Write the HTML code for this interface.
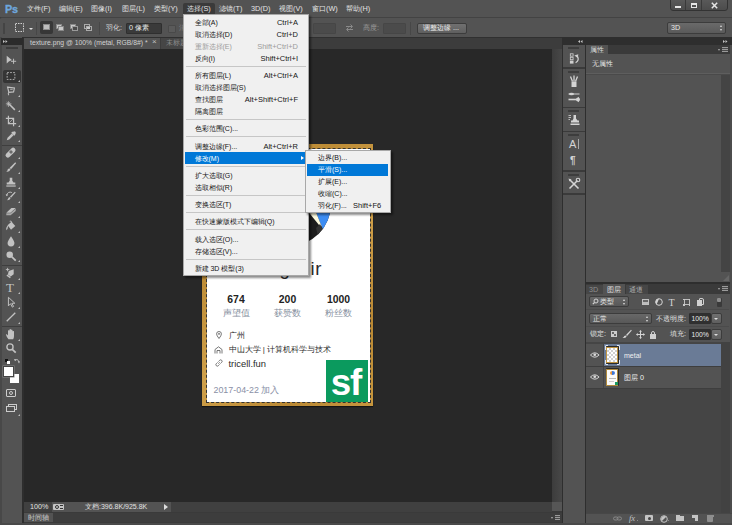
<!DOCTYPE html>
<html><head><meta charset="utf-8">
<style>
*{margin:0;padding:0;box-sizing:border-box}
html,body{width:732px;height:525px;overflow:hidden;background:#3a3a3a;font-family:"Liberation Sans",sans-serif;font-size:7.200px;color:#d8d8d8}
.a{position:absolute}
.t{position:absolute;white-space:nowrap;line-height:10px;height:10px}
svg{position:absolute;overflow:visible}
/* menubar */
#menubar{left:0;top:0;width:732px;height:17px;background:#535353}
#menubar .t{top:4px;color:#e4e4e4;font-size:7.300px}
#optbar{left:0;top:17px;width:732px;height:20px;background:#535353;border-top:1px solid #434343;border-radius:2px 0 0 0}
#optbar .t{top:4px}
#optbar>*{margin-top:1px}
.inp{position:absolute;background:#3a3a3a;border:1px solid #2f2f2f;border-radius:1px}
.inpd{position:absolute;background:#4b4b4b;border:1px solid #464646;border-radius:1px}
.btn{position:absolute;background:linear-gradient(#707070,#5f5f5f);border:1px solid #3c3c3c;border-radius:2px}
#tabbar{left:24px;top:37px;width:538.500px;height:12px;background:#3c3c3c;border-top:1.500px solid #303030}
#canvas{left:24px;top:49px;width:528px;height:453px;background:#282828}
#vscroll{left:552px;top:49px;width:9.500px;height:453px;background:linear-gradient(90deg,#3c3c3c,#484848)}
#toolbox{left:0;top:37px;width:24px;height:488px;background:#2e2e2e}
#toolbox .body{left:0;top:0;width:22px;height:486px;background:#535353;border-left:2px solid #484848}
/* dropdown menu */
.menu{position:absolute;background:#f0f0f0;border:1px solid #a8a8a8;box-shadow:2px 2px 2px rgba(0,0,0,.45)}
.menu .t{color:#151515;font-size:7px;margin-top:.5px}
.menu .r,.menu .sc{font-size:7.500px}
.menu .d{color:#9c9c9c}
.menu .r{right:10px}
.sep{position:absolute;left:2px;right:2px;height:1px;background:#c6c6c6}
.hl{position:absolute;background:#0078d7}
.menu .w{color:#fff}
.st{font-size:10.400px;font-weight:bold;color:#222;text-align:center}
.sl{font-size:9px;color:#838d9c;text-align:center}
.in{font-size:8px;color:#2a2a2a}
/* panels */
.pbg{background:#535353}
</style></head><body>

<!-- document canvas -->
<div class="a" id="canvas"></div>
<div class="a" id="vscroll"></div>
<div class="a" id="tabbar">
  <div class="a" style="left:0;top:-.5px;width:136px;height:11px;background:#535353"></div>
  <div class="t" style="left:6px;top:-.5px;color:#d2d2d2;font-size:6.800px">texture.png @ 100% (metal, RGB/8#) *</div>
  <div class="t" style="left:128px;top:-1px;color:#c0c0c0;font-size:8px">×</div>
  <div class="a" style="left:137px;top:-.5px;width:60px;height:11px;background:#464646"></div>
  <div class="t" style="left:142px;top:-.5px;color:#8c8c8c">未标题-1</div>
</div>

<!-- card -->
<div class="a" id="card" style="left:202px;top:144px;width:171px;height:262px;background:linear-gradient(135deg,#c89a44,#bd8c36 30%,#cfa04a 55%,#b98834 80%,#c6963e);box-shadow:0 1px 1px rgba(0,0,0,.5)">
 <div class="a" style="left:4.500px;top:4.500px;width:163.500px;height:253.500px;background:#fff;outline:1px dashed #333;outline-offset:-0.500px"></div>
 <!-- avatar -->
 <svg style="left:0;top:0" width="171" height="110" viewBox="0 0 171 110"><defs><clipPath id="av"><circle cx="85.750" cy="59.300" r="43.400"/></clipPath></defs>
 <g clip-path="url(#av)"><rect x="40" y="14" width="92" height="92" fill="#1d1d1d"/>
 <path d="M106.700 50H135V96H125.100Z" fill="#3d8df3"/>
 <path d="M104 65L112.700 65L119.700 82.500L117 81Z" fill="#fdfbe0"/>
 <path d="M114 84L118 80L121 86L116 92Z" fill="#333"/>
 </g></svg>
 <div class="t" style="left:77.500px;top:113.800px;height:22px;line-height:22px;font-size:18.500px;color:#2a2a2a">g</div><div class="t" style="left:108.500px;top:113.800px;height:22px;line-height:22px;font-size:18.500px;color:#2a2a2a;letter-spacing:.6px">ir</div>
 <!-- stats -->
 <div class="t st" style="left:14px;width:40px;top:151px">674</div>
 <div class="t st" style="left:65.500px;width:40px;top:151px">200</div>
 <div class="t st" style="left:116.500px;width:40px;top:151px">1000</div>
 <div class="t sl" style="left:14px;width:40px;top:164px">声望值</div>
 <div class="t sl" style="left:65.500px;width:40px;top:164px">获赞数</div>
 <div class="t sl" style="left:116.500px;width:40px;top:164px">粉丝数</div>
 <!-- info -->
 <svg style="left:13.500px;top:187px" width="6" height="8" viewBox="0 0 6 8"><path d="M3 .5A2.400 2.400 0 0 1 5.400 2.900Q5.400 4.500 3 7.500Q.6 4.500 .6 2.900A2.400 2.400 0 0 1 3 .5Z" fill="none" stroke="#555" stroke-width=".8"/><circle cx="3" cy="2.900" r=".8" fill="#555"/></svg>
 <div class="t in" style="left:26.500px;top:186.500px">广州</div>
 <svg style="left:12px;top:201.500px" width="9" height="8" viewBox="0 0 9 8"><path d="M1 7.500V3.500L4.500 .8L8 3.500V7.500M3 7.500V4.500H6V7.500" fill="none" stroke="#555" stroke-width=".8"/></svg>
 <div class="t in" style="left:26.500px;top:201px">中山大学 | 计算机科学与技术</div>
 <svg style="left:12.500px;top:215px" width="8" height="8" viewBox="0 0 8 8"><path d="M3.300 4.700L4.700 3.300M2.600 3.400L1.300 4.700A1.400 1.400 0 0 0 3.300 6.700L4.600 5.400M3.400 2.600L4.700 1.300A1.400 1.400 0 0 1 6.700 3.300L5.400 4.600" fill="none" stroke="#555" stroke-width=".8"/></svg>
 <div class="t in" style="left:26.500px;top:214.500px;font-size:9.400px">tricell.fun</div>
 <div class="t" style="left:11.500px;top:241px;font-size:8.900px;color:#8a90a6">2017-04-22 加入</div>
 <div class="a" style="left:124px;top:216px;width:42px;height:42px;background:#0b9a5e"></div>
 <div class="t" style="left:123.500px;top:217.700px;width:40px;height:42px;line-height:40px;font-size:37.500px;font-weight:bold;color:#fff;letter-spacing:-1px;text-align:center;transform:scaleX(.98)">sf</div>
</div>

<!-- status bar -->
<div class="a" style="left:24px;top:502px;width:528px;height:10px;background:#404040"></div>
<div class="a" style="left:24px;top:502px;width:28px;height:10px;background:#404040"></div>
<div class="a pbg" style="left:52px;top:502px;width:119px;height:10px"></div>
<div class="a" style="left:552px;top:502px;width:10px;height:9px;background:#565656"></div>
<div class="t" style="left:30px;top:502px;color:#e0e0e0">100%</div>
<div class="t" style="left:85px;top:502px;color:#e0e0e0;font-size:7px">文档:396.8K/925.8K</div>
<div class="a" style="left:53px;top:503.500px;width:11px;height:6.500px;background:#c4c4c4;border-radius:1px"></div><div class="a" style="left:54.500px;top:504.500px;width:4px;height:4px;border:1px solid #333;border-radius:50%"></div><div class="a" style="left:60px;top:505px;width:3px;height:1px;background:#333"></div><div class="a" style="left:60px;top:507.500px;width:3px;height:1px;background:#333"></div>
<div class="a" style="left:164px;top:504px;width:0;height:0;border-left:4px solid #ddd;border-top:3px solid transparent;border-bottom:3px solid transparent"></div>
<!-- timeline bar -->
<div class="a" style="left:24px;top:513px;width:539px;height:9px;background:#3d3d3d"></div>
<div class="a pbg" style="left:24px;top:513px;width:29px;height:9px"></div>
<div class="t" style="left:28px;top:513px;color:#d0d0d0">时间轴</div>
<div class="a" style="left:551px;top:517px;width:0;height:0;border-top:2px solid #aaa;border-left:1.500px solid transparent;border-right:1.500px solid transparent"></div><div class="a" style="left:555px;top:515px;width:5px;height:5px;background:repeating-linear-gradient(#9a9a9a 0 1px,#4a4a4a 1px 2px)"></div>

<div class="a" id="menubar">
  <div class="a" style="left:183px;top:3px;width:32px;height:14px;background:#3a3a3a;border-radius:2px 2px 0 0"></div>
  <div class="t" style="left:4.500px;top:1.500px;height:14px;line-height:14px;font-size:11.500px;font-weight:bold;color:#6ea6dc;-webkit-text-stroke:.35px #6ea6dc;letter-spacing:-0.300px;transform:scaleX(.94);transform-origin:0 0">Ps</div>
  <div class="t" style="left:27px">文件(F)</div>
  <div class="t" style="left:59px">编辑(E)</div>
  <div class="t" style="left:91px">图像(I)</div>
  <div class="t" style="left:122px">图层(L)</div>
  <div class="t" style="left:154px">类型(Y)</div>
  <div class="t" style="left:187px">选择(S)</div>
  <div class="t" style="left:219px">滤镜(T)</div>
  <div class="t" style="left:251px">3D(D)</div>
  <div class="t" style="left:279px">视图(V)</div>
  <div class="t" style="left:312px">窗口(W)</div>
  <div class="t" style="left:346px">帮助(H)</div>
  <!-- window controls -->
  <div class="a" style="left:670px;top:-2px;width:58px;height:13px;background:linear-gradient(#5a5a5a,#4c4c4c);border:1px solid #333;border-radius:0 0 3px 3px"></div>
  <div class="a" style="left:685px;top:0;width:1px;height:10px;background:#3a3a3a"></div>
  <div class="a" style="left:701px;top:0;width:1px;height:10px;background:#3a3a3a"></div>
  <div class="a" style="left:675px;top:6px;width:6px;height:2px;background:#e6e6e6"></div>
  <div class="a" style="left:691px;top:3px;width:6px;height:5px;border:1px solid #e6e6e6;border-top-width:2px"></div>
  <svg style="left:711px;top:2px" width="7" height="7" viewBox="0 0 7 7"><path d="M0.8 0.8L6.2 6.2M6.2 0.8L0.8 6.2" stroke="#e6e6e6" stroke-width="1.5"/></svg>
</div>
<div class="a" id="optbar">
  <div class="a" style="left:3px;top:4px;width:2px;height:11px;background:#444"></div>
  <svg style="left:14.500px;top:4px" width="9" height="9" viewBox="0 0 9 9"><rect x=".5" y=".5" width="8" height="8" fill="none" stroke="#d0d0d0" stroke-width="1" stroke-dasharray="1.500 1"/></svg>
  <div class="a" style="left:29px;top:9px;width:0;height:0;border-top:2px solid #ddd;border-left:2px solid transparent;border-right:2px solid transparent"></div>
  <div class="a" style="left:36px;top:3px;width:1px;height:13px;background:#474747"></div>
  <div class="a" style="left:40px;top:2px;width:13px;height:13px;background:#373737;border-radius:2px"></div>
  <div class="a" style="left:43px;top:5px;width:7px;height:6px;background:#bdbdbd;border:1px solid #8a8a8a"></div>
  <div class="a" style="left:56px;top:5px;width:6px;height:5px;background:#c8c8c8;border:1px solid #888"></div>
  <div class="a" style="left:58px;top:7px;width:6px;height:5px;background:#c8c8c8;border:1px solid #888"></div>
  <div class="a" style="left:70px;top:5px;width:6px;height:5px;background:#c8c8c8;border:1px solid #888"></div>
  <div class="a" style="left:72px;top:7px;width:6px;height:5px;background:#4a4a4a;border:1px solid #9a9a9a"></div>
  <div class="a" style="left:84px;top:5px;width:6px;height:5px;border:1px solid #aaa"></div>
  <div class="a" style="left:86px;top:7px;width:6px;height:5px;border:1px solid #aaa"></div>
  <div class="a" style="left:87px;top:8px;width:3px;height:2px;background:#c8c8c8"></div>
  <div class="a" style="left:99px;top:3px;width:1px;height:13px;background:#474747"></div>
  <div class="t" style="left:106px">羽化:</div>
  <div class="inp" style="left:126px;top:4px;width:36px;height:11px"></div>
  <div class="t" style="left:129px;color:#e8e8e8">0 像素</div>
  <div class="a" style="left:168px;top:6px;width:8px;height:8px;background:#5a5a5a;border:1px solid #494949;border-radius:1px"></div>
  <div class="t" style="left:179px;color:#8a8a8a">消</div>
  <div class="inpd" style="left:313px;top:4px;width:23px;height:11px"></div>
  <svg style="left:345px;top:5px" width="9" height="8" viewBox="0 0 9 8"><path d="M1 2.5H7M5.5 0.5L7.5 2.5L5.5 4.5M8 5.5H2M3.5 3.5L1.5 5.5L3.5 7.5" stroke="#8a8a8a" stroke-width="1" fill="none"/></svg>
  <div class="t" style="left:363px;color:#9c9c9c">高度:</div>
  <div class="inpd" style="left:383px;top:4px;width:23px;height:11px"></div>
  <div class="a" style="left:410px;top:3px;width:1px;height:13px;background:#474747"></div>
  <div class="btn" style="left:417px;top:4px;width:50px;height:11px"></div>
  <div class="t" style="left:423px;color:#f0f0f0">调整边缘 ...</div>
  <div class="btn" style="left:667px;top:2.700px;width:59px;height:12px;background:linear-gradient(#6a6a6a,#5a5a5a)"></div>
  <div class="t" style="left:671px;top:4px;color:#e8e8e8">3D</div>
  <div class="a" style="left:720px;top:6px;width:0;height:0;border-bottom:2px solid #ddd;border-left:1.5px solid transparent;border-right:1.5px solid transparent"></div>
  <div class="a" style="left:720px;top:10px;width:0;height:0;border-top:2px solid #ddd;border-left:1.5px solid transparent;border-right:1.5px solid transparent"></div>
</div>
<div class="a" id="toolbox"><div class="a body"></div>
<div class="a" style="left:1px;top:1px;width:22px;height:7px;background:#2b2b2b"></div>
<svg style="left:3px;top:3px" width="4.500" height="3" viewBox="0 0 4.500 3"><path d="M0 0L2 1.500L0 3ZM2.500 0L4.500 1.500L2.500 3Z" fill="#c4c4c4"/></svg>
<div class="a" style="left:6px;top:10px;width:12px;height:2px;background:#3c3c3c"></div>
<svg style="left:5px;top:17px" width="12" height="12" viewBox="0 0 14 14"><path d="M2 2V11L4.5 8.8L8 7Z" fill="#c2c2c2"/><path d="M10 5.5V11.5M7 8.5H13" stroke="#c2c2c2" stroke-width="1.1"/></svg>
<div class="a" style="left:3px;top:33px;width:18px;height:13px;background:#353535;border-radius:2px"></div>
<svg style="left:5px;top:32.5px" width="12" height="12" viewBox="0 0 14 14"><rect x="2.5" y="3" width="9" height="8" fill="none" stroke="#c2c2c2" stroke-width="1" stroke-dasharray="2 1.5"/></svg>
<div class="a" style="left:18px;top:42.5px;width:0;height:0;border-bottom:2px solid #bbb;border-left:2px solid transparent"></div>
<svg style="left:5px;top:47.5px" width="12" height="12" viewBox="0 0 14 14"><path d="M3 2.5L11 3.5L10 8L4.5 8.5Z" fill="none" stroke="#c2c2c2" stroke-width="1.3"/><path d="M4.5 8.5Q3 10 4.5 12" stroke="#c2c2c2" fill="none" stroke-width="1.2"/><path d="M6 5H9" stroke="#c2c2c2" stroke-width="1"/></svg>
<div class="a" style="left:18px;top:57.5px;width:0;height:0;border-bottom:2px solid #bbb;border-left:2px solid transparent"></div>
<svg style="left:5px;top:62.5px" width="12" height="12" viewBox="0 0 14 14"><path d="M5 5L11.5 11.5" stroke="#c2c2c2" stroke-width="1.8"/><path d="M4 1.5V8M1 4.5H7.5M2 2.5L6 6.5M6 2.5L2 6.5" stroke="#c2c2c2" stroke-width=".9"/></svg>
<div class="a" style="left:18px;top:72.5px;width:0;height:0;border-bottom:2px solid #bbb;border-left:2px solid transparent"></div>
<svg style="left:5px;top:77.5px" width="12" height="12" viewBox="0 0 14 14"><path d="M4 1V10H13M1 4H10V13" stroke="#c2c2c2" stroke-width="1.4" fill="none"/><path d="M10.5 3.5L4.5 9.5" stroke="#c2c2c2" stroke-width=".8"/></svg>
<div class="a" style="left:18px;top:87.5px;width:0;height:0;border-bottom:2px solid #bbb;border-left:2px solid transparent"></div>
<svg style="left:5px;top:93px" width="12" height="12" viewBox="0 0 14 14"><path d="M2 12L3 9L8 4L10 6L5 11Z" fill="#c2c2c2"/><path d="M8 2.5L11.5 6" stroke="#c2c2c2" stroke-width="2"/><circle cx="10.8" cy="3.2" r="1.8" fill="#c2c2c2"/></svg>
<div class="a" style="left:18px;top:103px;width:0;height:0;border-bottom:2px solid #bbb;border-left:2px solid transparent"></div>
<div class="a" style="left:2px;top:108px;width:20px;height:1px;background:#3e3e3e"></div>
<svg style="left:5px;top:109px" width="12" height="12" viewBox="0 0 14 14"><rect x="-1" y="4.5" width="14" height="5.4" rx="2.5" fill="#c2c2c2" transform="rotate(-45 7 7)"/><rect x="5.3" y="5.3" width="3.4" height="3.4" fill="#6b6b6b" transform="rotate(-45 7 7)"/></svg>
<div class="a" style="left:18px;top:120px;width:0;height:0;border-bottom:2px solid #bbb;border-left:2px solid transparent"></div>
<svg style="left:5px;top:123.5px" width="12" height="12" viewBox="0 0 14 14"><path d="M12 1.5L13 2.5L7 9.5L5.5 8Z" fill="#c2c2c2"/><path d="M5 8.5L6.5 10Q5 13 1.5 12.5Q3.5 11 3.2 9.5Z" fill="#c2c2c2"/></svg>
<div class="a" style="left:18px;top:134.5px;width:0;height:0;border-bottom:2px solid #bbb;border-left:2px solid transparent"></div>
<svg style="left:5px;top:138.5px" width="12" height="12" viewBox="0 0 14 14"><path d="M5.5 2H8.5V5.5L10 7.5H12V10H2V7.5H4L5.5 5.5Z" fill="#c2c2c2"/><rect x="1.5" y="11" width="11" height="1.4" fill="#c2c2c2"/></svg>
<div class="a" style="left:18px;top:149.5px;width:0;height:0;border-bottom:2px solid #bbb;border-left:2px solid transparent"></div>
<svg style="left:5px;top:153px" width="12" height="12" viewBox="0 0 14 14"><path d="M11.5 2L12.5 3L7 9L5.8 7.8Z" fill="#c2c2c2"/><path d="M5.3 8.3L6.5 9.5Q5.5 12 2.5 11.8Q4 10.5 3.8 9.2Z" fill="#c2c2c2"/><path d="M2 6.5A4 4 0 0 1 8 3" stroke="#c2c2c2" fill="none" stroke-width="1.1"/><path d="M0.8 5L2 7.3L3.8 5.5Z" fill="#c2c2c2"/></svg>
<div class="a" style="left:18px;top:164px;width:0;height:0;border-bottom:2px solid #bbb;border-left:2px solid transparent"></div>
<svg style="left:5px;top:168px" width="12" height="12" viewBox="0 0 14 14"><path d="M1.5 9L7.5 3.5H12.5L6.5 9Z" fill="#c2c2c2"/><path d="M1.5 9.6H6.5L12.5 4.2V7L6.5 12H1.5Z" fill="#a8a8a8"/></svg>
<div class="a" style="left:18px;top:179px;width:0;height:0;border-bottom:2px solid #bbb;border-left:2px solid transparent"></div>
<svg style="left:5px;top:182.5px" width="12" height="12" viewBox="0 0 14 14"><path d="M3 6L7.5 2L12 7L7 11.5Z" fill="#c2c2c2"/><path d="M3 6.5Q1 9 1.5 12Q3.5 10.5 3.6 7Z" fill="#c2c2c2"/><path d="M5.5 1.5Q7.5 0 8 3.5" fill="none" stroke="#c2c2c2" stroke-width="1"/></svg>
<div class="a" style="left:18px;top:193.5px;width:0;height:0;border-bottom:2px solid #bbb;border-left:2px solid transparent"></div>
<svg style="left:5px;top:197.5px" width="12" height="12" viewBox="0 0 14 14"><path d="M7 1.5Q11 7.5 11 9.3A4 4 0 0 1 3 9.3Q3 7.5 7 1.5Z" fill="#c2c2c2"/></svg>
<div class="a" style="left:18px;top:208.5px;width:0;height:0;border-bottom:2px solid #bbb;border-left:2px solid transparent"></div>
<svg style="left:5px;top:213px" width="12" height="12" viewBox="0 0 14 14"><circle cx="5.5" cy="5.5" r="3.8" fill="#c2c2c2"/><path d="M8 8L12.5 12.5" stroke="#c2c2c2" stroke-width="2"/></svg>
<div class="a" style="left:18px;top:223px;width:0;height:0;border-bottom:2px solid #bbb;border-left:2px solid transparent"></div>
<div class="a" style="left:2px;top:228px;width:20px;height:1px;background:#3e3e3e"></div>
<svg style="left:5px;top:229.5px" width="12" height="12" viewBox="0 0 14 14"><path d="M7 1.5L10.5 6.5L9 10.5H5L3.5 6.5Z" fill="#c2c2c2" transform="rotate(35 7 7)"/><path d="M1 3H5M3 1V5" stroke="#c2c2c2" stroke-width="1"/><rect x="4.5" y="11" width="5" height="1.6" fill="#c2c2c2" transform="rotate(35 7 7)"/></svg>
<div class="a" style="left:18px;top:240.5px;width:0;height:0;border-bottom:2px solid #bbb;border-left:2px solid transparent"></div>
<div class="t" style="left:6px;top:243.500px;height:14px;line-height:14px;font-family:'Liberation Serif',serif;font-size:13px;color:#c2c2c2">T</div>
<div class="a" style="left:18px;top:255px;width:0;height:0;border-bottom:2px solid #bbb;border-left:2px solid transparent"></div>
<svg style="left:5px;top:258.5px" width="12" height="12" viewBox="0 0 14 14"><path d="M4 1.5V11.5L6.5 9L8.5 13L10 12.2L8 8.5H11.5Z" fill="none" stroke="#c2c2c2" stroke-width="1.1"/></svg>
<div class="a" style="left:18px;top:269.5px;width:0;height:0;border-bottom:2px solid #bbb;border-left:2px solid transparent"></div>
<svg style="left:5px;top:273.5px" width="12" height="12" viewBox="0 0 14 14"><path d="M2 12L12 2" stroke="#c2c2c2" stroke-width="1.5"/></svg>
<div class="a" style="left:18px;top:284.5px;width:0;height:0;border-bottom:2px solid #bbb;border-left:2px solid transparent"></div>
<div class="a" style="left:2px;top:289px;width:20px;height:1px;background:#3e3e3e"></div>
<svg style="left:5px;top:290.5px" width="12" height="12" viewBox="0 0 14 14"><path d="M4 13Q1.5 9.5 1 7.5Q2 6.8 3.5 8.8V3Q4.5 2 5.2 3V6.5V1.8Q6.2 .8 7 1.8V6.5V2.3Q8 1.4 8.7 2.3V7V3.8Q9.8 3 10.5 3.8V9.5Q10.5 11.5 9.5 13Z" fill="#c2c2c2"/></svg>
<div class="a" style="left:18px;top:301.5px;width:0;height:0;border-bottom:2px solid #bbb;border-left:2px solid transparent"></div>
<svg style="left:5px;top:305px" width="12" height="12" viewBox="0 0 14 14"><circle cx="5.8" cy="5.8" r="3.6" fill="none" stroke="#c2c2c2" stroke-width="1.6"/><path d="M8.5 8.5L12.5 12.5" stroke="#c2c2c2" stroke-width="2"/></svg>
<div class="a" style="left:5px;top:322px;width:3px;height:3px;background:#111;border:0"></div><div class="a" style="left:7px;top:324px;width:3px;height:3px;background:#fff"></div>
<svg style="left:14px;top:321px" width="6" height="6" viewBox="0 0 6 6"><path d="M1 2.5Q3.5 0 5 4" stroke="#c2c2c2" fill="none" stroke-width="1"/><path d="M0 1L2.2 1.2L1 3.3Z M3.8 3.5L6 3.5L5 5.5Z" fill="#c2c2c2"/></svg>
<div class="a" style="left:9px;top:336px;width:10.500px;height:10.500px;background:#fff;border:1px solid #555"></div>
<div class="a" style="left:3px;top:329px;width:11px;height:11px;background:#fff;border:1px solid #444;box-shadow:0 0 0 .5px #888"></div>
<div class="a" style="left:6px;top:351.500px;width:10px;height:8px;border:1px solid #ccc;border-radius:1px"></div><div class="a" style="left:9px;top:353.500px;width:4px;height:4px;border:1px solid #ccc;border-radius:50%"></div>
<div class="a" style="left:8px;top:366.500px;width:9px;height:6px;border:1px solid #ccc;background:#535353"></div><div class="a" style="left:6px;top:368.500px;width:9px;height:6px;border:1px solid #ccc;background:#535353"></div>
<div class="a" style="left:18px;top:377px;width:0;height:0;border-bottom:2px solid #bbb;border-left:2px solid transparent"></div>
</div>

<div class="menu" style="left:183px;top:14px;width:126px;height:261.500px">
<div class="hl" style="left:1px;top:137px;width:122px;height:12px"></div>
<div class="t " style="left:10.500px;top:2px">全部(A)</div>
<div class="t  r" style="top:2px">Ctrl+A</div>
<div class="t " style="left:10.500px;top:14px">取消选择(D)</div>
<div class="t  r" style="top:14px">Ctrl+D</div>
<div class="t d" style="left:10.500px;top:26px">重新选择(E)</div>
<div class="t d r" style="top:26px">Shift+Ctrl+D</div>
<div class="t " style="left:10.500px;top:38px">反向(I)</div>
<div class="t  r" style="top:38px">Shift+Ctrl+I</div>
<div class="t " style="left:10.500px;top:55px">所有图层(L)</div>
<div class="t  r" style="top:55px">Alt+Ctrl+A</div>
<div class="t " style="left:10.500px;top:67px">取消选择图层(S)</div>
<div class="t " style="left:10.500px;top:79px">查找图层</div>
<div class="t  r" style="top:79px">Alt+Shift+Ctrl+F</div>
<div class="t " style="left:10.500px;top:91px">隔离图层</div>
<div class="t " style="left:10.500px;top:108px">色彩范围(C)...</div>
<div class="t " style="left:10.500px;top:126px">调整边缘(F)...</div>
<div class="t  r" style="top:126px">Alt+Ctrl+R</div>
<div class="t w" style="left:10.500px;top:138px">修改(M)</div>
<div class="t " style="left:10.500px;top:155px">扩大选取(G)</div>
<div class="t " style="left:10.500px;top:167px">选取相似(R)</div>
<div class="t " style="left:10.500px;top:184px">变换选区(T)</div>
<div class="t " style="left:10.500px;top:201px">在快速蒙版模式下编辑(Q)</div>
<div class="t " style="left:10.500px;top:219px">载入选区(O)...</div>
<div class="t " style="left:10.500px;top:231px">存储选区(V)...</div>
<div class="t " style="left:10.500px;top:248px">新建 3D 模型(3)</div>
<div class="sep" style="top:50.5px"></div>
<div class="sep" style="top:103.5px"></div>
<div class="sep" style="top:121px"></div>
<div class="sep" style="top:151px"></div>
<div class="sep" style="top:179.5px"></div>
<div class="sep" style="top:196.5px"></div>
<div class="sep" style="top:214px"></div>
<div class="sep" style="top:243.5px"></div>
<div class="a" style="left:117px;top:140.5px;width:0;height:0;border-left:3px solid #fff;border-top:2.500px solid transparent;border-bottom:2.500px solid transparent"></div>
</div>
<div class="menu" style="left:304.500px;top:149.800px;width:86px;height:63.600px">
<div class="hl" style="left:1.700px;top:13.500px;width:81.300px;height:11.500px"></div>
<div class="t " style="left:12.500px;top:2.2px">边界(B)...</div>
<div class="t w" style="left:12.500px;top:14.2px">平滑(S)...</div>
<div class="t " style="left:12.500px;top:26.2px">扩展(E)...</div>
<div class="t " style="left:12.500px;top:38.2px">收缩(C)...</div>
<div class="t " style="left:12.500px;top:50.2px">羽化(F)...</div>
<div class="t sc" style="left:47.500px;top:50.2px">Shift+F6</div>
</div>
<!-- right dock -->
<div class="a" id="dock" style="left:562px;top:37px;width:170px;height:488px;background:#2e2e2e">
<div class="a pbg" style="left:1px;top:8px;width:22px;height:478px"></div>
<div class="a" style="left:6px;top:10px;width:11px;height:2px;background:#3d3d3d"></div>
<svg style="left:5px;top:14.500px" width="14" height="14" viewBox="0 0 14 14"><rect x="3.300" y="1.800" width="2.800" height="2.400" fill="none" stroke="#cfcfcf" stroke-width=".8"/><rect x="3.300" y="5.300" width="2.800" height="2.400" fill="none" stroke="#cfcfcf" stroke-width=".8"/><rect x="2.900" y="8.600" width="3.600" height="3" fill="#cfcfcf"/><path d="M8.600 10.800Q12.800 8.500 10.300 4" stroke="#cfcfcf" fill="none" stroke-width="1.300"/><path d="M7.300 3.400L11.300 2.200L10.800 6Z" fill="#cfcfcf"/></svg>
<div class="a" style="left:1px;top:30px;width:22px;height:1.500px;background:#3a3a3a"></div>
<div class="a" style="left:6px;top:34px;width:11px;height:2px;background:#3d3d3d"></div>
<svg style="left:5.0px;top:37.0px" width="14" height="14" viewBox="0 0 14 14"><rect x="4.5" y="7.5" width="5" height="5.5" fill="#d4d4d4"/><path d="M5.5 7.5L3.5 2.5M7 7.5V1.5M8.5 7.5L10.5 2.5" stroke="#d4d4d4" stroke-width="1.3"/></svg>
<svg style="left:5.0px;top:53.0px" width="14" height="14" viewBox="0 0 14 14"><path d="M1.5 4H12.5" stroke="#d4d4d4" stroke-width="1"/><ellipse cx="4.5" cy="4" rx="2.5" ry="1.3" fill="#d4d4d4"/><path d="M1.5 9.5H9" stroke="#d4d4d4" stroke-width="1.6"/><path d="M8.5 9.5L12 6.8V12.2Z" fill="#d4d4d4"/><circle cx="11" cy="9.5" r="2" fill="#d4d4d4"/></svg>
<div class="a" style="left:1px;top:69.500px;width:22px;height:1.500px;background:#3a3a3a"></div>
<div class="a" style="left:6px;top:73px;width:11px;height:2px;background:#3d3d3d"></div>
<svg style="left:5.0px;top:75.700px" width="14" height="14" viewBox="0 0 14 14"><path d="M6.5 2H9V5.5L10.5 7.5H12V9.5H4V7.5H5.5L6.5 5.5Z" fill="#d4d4d4"/><rect x="3.5" y="10.5" width="9" height="1.5" fill="#d4d4d4"/><path d="M1.5 2.5H4M1.5 4.5H4M1.5 6.5H3" stroke="#d4d4d4" stroke-width=".8"/></svg>
<div class="a" style="left:1px;top:93.500px;width:22px;height:1.500px;background:#3a3a3a"></div>
<div class="a" style="left:6px;top:97px;width:11px;height:2px;background:#3d3d3d"></div>
<div class="t" style="left:7px;top:101px;height:12px;line-height:12px;font-size:11px;color:#d4d4d4">A</div><div class="a" style="left:15.5px;top:102px;width:1px;height:10px;background:#aaa"></div>
<div class="t" style="left:8px;top:118px;height:11px;line-height:11px;font-size:10px;font-weight:bold;color:#d4d4d4">&para;</div>
<div class="a" style="left:1px;top:133px;width:22px;height:1.500px;background:#3a3a3a"></div>
<div class="a" style="left:6px;top:137px;width:11px;height:2px;background:#3d3d3d"></div>
<svg style="left:5.0px;top:140.0px" width="14" height="14" viewBox="0 0 14 14"><path d="M2.5 11.5L10.5 3.5" stroke="#d4d4d4" stroke-width="1.6"/><path d="M2.5 2.5L11.5 11.5" stroke="#d4d4d4" stroke-width="1.6"/><circle cx="11" cy="3" r="1.8" fill="none" stroke="#d4d4d4" stroke-width="1.1"/><path d="M1.5 1.5L4.5 2.5L2.5 4.5Z" fill="#d4d4d4"/></svg>
<div class="a" style="left:1px;top:156.300px;width:22px;height:1.500px;background:#3a3a3a"></div>
<svg style="left:16px;top:3px" width="4.500" height="3" viewBox="0 0 4.500 3"><path d="M2 0L0 1.500L2 3ZM4.500 0L2.500 1.500L4.500 3Z" fill="#c4c4c4"/></svg>
<svg style="left:161px;top:3px" width="4.500" height="3" viewBox="0 0 4.500 3"><path d="M0 0L2 1.500L0 3ZM2.500 0L4.500 1.500L2.500 3Z" fill="#c4c4c4"/></svg>
<div class="a" style="left:24px;top:8px;width:146px;height:9px;background:#3a3a3a"></div>
<div class="a pbg" style="left:24px;top:17px;width:146px;height:228px"></div>
<div class="a pbg" style="left:24px;top:8px;width:22px;height:10px"></div>
<div class="t" style="left:28px;top:8px;color:#dcdcdc">属性</div>
<div class="t" style="left:30px;top:22px;color:#e6e6e6">无属性</div>
<div class="a" style="left:24px;top:36px;width:146px;height:1px;background:#5e5e5e"></div>
<div class="a" style="left:24px;top:37px;width:146px;height:1px;background:#4a4a4a"></div>
<div class="a" style="left:159px;top:38px;width:8.500px;height:197px;background:#444"></div><div class="a" style="left:161px;top:238px;width:0;height:0;border-bottom:6px solid #666;border-left:6px solid transparent"></div>
<div class="a" style="left:156px;top:12px;width:0;height:0;border-top:2px solid #aaa;border-left:1.500px solid transparent;border-right:1.500px solid transparent"></div><div class="a" style="left:160px;top:10px;width:6px;height:5px;background:repeating-linear-gradient(#9a9a9a 0 1px,#4a4a4a 1px 2px)"></div>
<div class="a" style="left:24px;top:247px;width:146px;height:10px;background:#3a3a3a"></div>
<div class="a" style="left:24px;top:248px;width:17px;height:9px;background:#464646"></div>
<div class="a" style="left:64px;top:248px;width:22px;height:9px;background:#464646"></div>
<div class="a pbg" style="left:41px;top:247px;width:22px;height:11px"></div>
<div class="a pbg" style="left:24px;top:257px;width:146px;height:229px"></div>
<div class="t" style="left:27px;top:248px;color:#8e8e8e">3D</div>
<div class="t" style="left:45px;top:248px;color:#e0e0e0">图层</div>
<div class="t" style="left:67px;top:248px;color:#b4b4b4">通道</div>
<div class="a" style="left:156px;top:251px;width:0;height:0;border-top:2px solid #aaa;border-left:1.500px solid transparent;border-right:1.500px solid transparent"></div><div class="a" style="left:160px;top:249px;width:6px;height:5px;background:repeating-linear-gradient(#9a9a9a 0 1px,#4a4a4a 1px 2px)"></div>
<div class="btn" style="left:27px;top:259px;width:40px;height:11px;background:linear-gradient(#686868,#585858)"></div>
<svg style="left:30px;top:261px" width="7" height="7" viewBox="0 0 7 7"><circle cx="4" cy="3" r="2" fill="none" stroke="#d4d4d4" stroke-width="1"/><path d="M2.5 4.5L.8 6.2" stroke="#d4d4d4" stroke-width="1.2"/></svg>
<div class="t" style="left:38px;top:260px;color:#e6e6e6">类型</div>
<div class="a" style="left:61px;top:262px;width:0;height:0;border-bottom:2px solid #ddd;border-left:1.5px solid transparent;border-right:1.5px solid transparent"></div><div class="a" style="left:61px;top:266px;width:0;height:0;border-top:2px solid #ddd;border-left:1.5px solid transparent;border-right:1.5px solid transparent"></div>
<div class="a" style="left:79.500px;top:261.500px;width:7.500px;height:6.500px;border:1px solid #c0c0c0;background:linear-gradient(#666 60%,#bbb 0)"></div>
<svg style="left:93px;top:261px" width="8" height="8" viewBox="0 0 8 8"><circle cx="4" cy="4" r="3.3" fill="none" stroke="#d4d4d4" stroke-width="1"/><path d="M4 .7A3.3 3.3 0 0 0 1.6 6.4Z" fill="#d4d4d4"/></svg>
<div class="t" style="left:106.5px;top:259.5px;height:11px;line-height:11px;font-family:'Liberation Serif',serif;font-size:10px;color:#d4d4d4">T</div>
<div class="a" style="left:121.500px;top:262px;width:6px;height:6px;border:1px solid #bebebe"></div><div class="a" style="left:121px;top:261.500px;width:1.500px;height:1.500px;background:#c8c8c8"></div><div class="a" style="left:126.500px;top:261.500px;width:1.500px;height:1.500px;background:#c8c8c8"></div><div class="a" style="left:121px;top:267px;width:1.500px;height:1.500px;background:#c8c8c8"></div><div class="a" style="left:126.500px;top:267px;width:1.500px;height:1.500px;background:#c8c8c8"></div>
<div class="a" style="left:135px;top:263px;width:5px;height:6px;background:#d0d0d0"></div><div class="a" style="left:137px;top:261px;width:5px;height:7px;border:1px solid #d0d0d0;border-radius:1px 2px 0 0"></div>
<div class="a" style="left:154.700px;top:260.500px;width:5px;height:9.500px;background:#3a3a3a;border-radius:1px"></div><div class="a" style="left:155.200px;top:261px;width:4px;height:4px;background:#8c8c8c;border-radius:1px"></div>
<div class="a" style="left:24px;top:272px;width:143px;height:1px;background:#4b4b4b"></div>
<div class="btn" style="left:27px;top:276px;width:63px;height:11px;background:linear-gradient(#686868,#585858)"></div>
<div class="t" style="left:31px;top:277px;color:#e6e6e6">正常</div>
<div class="a" style="left:84px;top:279px;width:0;height:0;border-bottom:2px solid #ddd;border-left:1.5px solid transparent;border-right:1.5px solid transparent"></div><div class="a" style="left:84px;top:283px;width:0;height:0;border-top:2px solid #ddd;border-left:1.5px solid transparent;border-right:1.5px solid transparent"></div>
<div class="t" style="left:94px;top:277px;color:#e0e0e0">不透明度:</div>
<div class="inp" style="left:127px;top:276px;width:22px;height:11px;background:#303030"></div><div class="t" style="left:129.500px;top:277px;color:#e8e8e8;font-size:6.800px">100%</div>
<div class="btn" style="left:148.500px;top:276px;width:11px;height:11px"></div><div class="a" style="left:152px;top:281px;width:0;height:0;border-top:2px solid #ddd;border-left:2px solid transparent;border-right:2px solid transparent"></div>
<div class="a" style="left:24px;top:289px;width:143px;height:1px;background:#4b4b4b"></div>
<div class="t" style="left:28px;top:292px;color:#e0e0e0">锁定:</div>
<div class="a" style="left:49px;top:294px;width:6px;height:6px;border:1px solid #ccc;background:conic-gradient(#ccc 25%,#666 0 50%,#ccc 0 75%,#666 0);background-size:4px 4px"></div>
<svg style="left:60px;top:292px" width="10" height="10" viewBox="0 0 10 10"><path d="M9 .8L9.8 1.6L5 7L4 6Z" fill="#d4d4d4"/><path d="M3.6 6.4L4.6 7.4Q3.5 9.5 .5 9Q2.2 8 2.2 7Z" fill="#d4d4d4"/></svg>
<svg style="left:74px;top:293px" width="9" height="9" viewBox="0 0 9 9"><path d="M4.5 .8V8.2M.8 4.500H8.2" stroke="#d4d4d4" stroke-width="1"/><path d="M4.5 0L6 1.8H3ZM4.5 9L6 7.200H3ZM0 4.500L1.800 3V6ZM9 4.500L7.200 3V6Z" fill="#d4d4d4"/></svg>
<div class="a" style="left:87.500px;top:297px;width:6px;height:5px;background:#d0d0d0"></div><div class="a" style="left:88.500px;top:293.500px;width:4px;height:5px;border:1px solid #d0d0d0;border-radius:2px 2px 0 0"></div>
<div class="t" style="left:108px;top:292px;color:#e0e0e0">填充:</div>
<div class="inp" style="left:127px;top:292px;width:22px;height:11px;background:#303030"></div><div class="t" style="left:129.500px;top:293px;color:#e8e8e8;font-size:6.800px">100%</div>
<div class="btn" style="left:148.500px;top:292px;width:11px;height:11px"></div><div class="a" style="left:152px;top:297px;width:0;height:0;border-top:2px solid #ddd;border-left:2px solid transparent;border-right:2px solid transparent"></div>
<div class="a" style="left:24px;top:305px;width:135px;height:171px;background:#454545"></div>
<div class="a" style="left:159px;top:305px;width:8.500px;height:171px;background:#424242"></div>
<div class="a" style="left:167.500px;top:8px;width:2.500px;height:478px;background:#4c4c4c"></div>
<div class="a pbg" style="left:24px;top:307px;width:17px;height:21.500px"></div>
<div class="a" style="left:41.500px;top:307px;width:117.500px;height:21.500px;background:#6a7b96"></div>
<div class="a pbg" style="left:24px;top:329.500px;width:135px;height:21.500px"></div>
<div class="a" style="left:41px;top:307px;width:1px;height:44px;background:#444"></div>
<div class="a" style="left:24px;top:328.500px;width:135px;height:1px;background:#3e3e3e"></div>
<div class="a" style="left:24px;top:351px;width:135px;height:1px;background:#3e3e3e"></div>
<svg style="left:27.500px;top:314.500px" width="9.500" height="6" viewBox="0 0 9.500 6"><path d="M.4 3Q4.750 -1.400 9.100 3Q4.750 7.400 .4 3Z" fill="#5a5a5a" stroke="#dcdcdc" stroke-width=".9"/><circle cx="4.750" cy="2.800" r="1.300" fill="#dcdcdc"/></svg> <svg style="left:27.500px;top:337px" width="9.500" height="6" viewBox="0 0 9.500 6"><path d="M.4 3Q4.750 -1.400 9.100 3Q4.750 7.400 .4 3Z" fill="#5a5a5a" stroke="#dcdcdc" stroke-width=".9"/><circle cx="4.750" cy="2.800" r="1.300" fill="#dcdcdc"/></svg>
<div class="a" style="left:42.500px;top:308px;width:15.500px;height:19.500px;border:1px solid #dfe6f2;border-radius:1px"></div>
<div class="a" style="left:46px;top:307.500px;width:8.500px;height:20.500px;background:#6a7b96"></div>
<div class="a" style="left:42px;top:313px;width:16.500px;height:9.500px;background:#6a7b96"></div>
<div class="a" style="left:43.500px;top:308.800px;width:13.500px;height:18px;background:#2a2a2a;border-radius:1px"></div>
<div class="a" style="left:44.200px;top:309.500px;width:12.100px;height:16.600px;border:1px solid #c09440;background:#fff conic-gradient(#d0d0d0 25%,#fff 0 50%,#d0d0d0 0 75%,#fff 0);background-size:4px 4px"></div>
<div class="t" style="left:62px;top:313.500px;color:#f0f0f0;font-size:7px">metal</div>
<div class="a" style="left:43.500px;top:331.200px;width:13.500px;height:18.300px;background:#2a2a2a;border-radius:1px"></div>
<div class="a" style="left:44.200px;top:332px;width:12.100px;height:16.800px;border:1px solid #b08a3c;background:#fbfbfb"></div>
<div class="a" style="left:47.500px;top:333.500px;width:5.500px;height:4.500px;border-radius:50%;background:linear-gradient(90deg,#e8963c 45%,#3c78dc 0)"></div>
<div class="a" style="left:47px;top:340.500px;width:7px;height:1px;background:#bbb"></div><div class="a" style="left:47px;top:343.500px;width:5px;height:1px;background:#ccc"></div>
<div class="a" style="left:52.500px;top:345px;width:3px;height:3px;background:#1a9a60"></div>
<div class="t" style="left:62px;top:336px;color:#f0f0f0">图层 0</div>
<div class="a pbg" style="left:24px;top:476px;width:146px;height:10px"></div><div class="a" style="left:24px;top:476px;width:146px;height:1px;background:#474747"></div>
<svg style="left:50.500px;top:478.500px" width="9" height="5" viewBox="0 0 9 5"><rect x=".5" y="1" width="4.500" height="3" rx="1.500" fill="none" stroke="#8c8c8c" stroke-width=".9"/><rect x="4" y="1" width="4.500" height="3" rx="1.500" fill="none" stroke="#8c8c8c" stroke-width=".9"/></svg>
<div class="t" style="left:67px;top:475.500px;font-family:'Liberation Serif',serif;font-style:italic;font-size:8.500px;color:#c4c4c4">fx</div><div class="a" style="left:75px;top:483px;width:0;height:0;border-bottom:1.500px solid #c4c4c4;border-left:1.500px solid transparent"></div>
<div class="a" style="left:83px;top:478px;width:8px;height:6px;background:#c4c4c4;border-radius:1px"></div><div class="a" style="left:85.500px;top:479.500px;width:3px;height:3px;border-radius:50%;background:#444"></div>
<svg style="left:97.500px;top:477.500px" width="8" height="8" viewBox="0 0 8 8"><circle cx="4" cy="4" r="3.300" fill="none" stroke="#c4c4c4" stroke-width="1"/><path d="M6.300 1.700A3.300 3.300 0 0 0 1.700 6.300Z" fill="#c4c4c4"/></svg><div class="a" style="left:106px;top:483px;width:0;height:0;border-bottom:1.500px solid #c4c4c4;border-left:1.500px solid transparent"></div>
<div class="a" style="left:113.500px;top:479px;width:8px;height:5px;background:#c4c4c4"></div><div class="a" style="left:113.500px;top:478px;width:4px;height:2px;background:#c4c4c4"></div>
<div class="a" style="left:129.500px;top:478px;width:6px;height:6px;background:#c4c4c4"></div><div class="a" style="left:129.500px;top:481px;width:3px;height:3px;background:#535353"></div>
<div class="a" style="left:145px;top:479.500px;width:6px;height:5px;background:#8e8e8e;border-radius:0 0 1px 1px"></div><div class="a" style="left:144.500px;top:478px;width:7px;height:1.500px;background:#8e8e8e"></div>
</div>

<div class="a" style="left:0;top:523px;width:732px;height:2px;background:#494949"></div>
</body></html>
